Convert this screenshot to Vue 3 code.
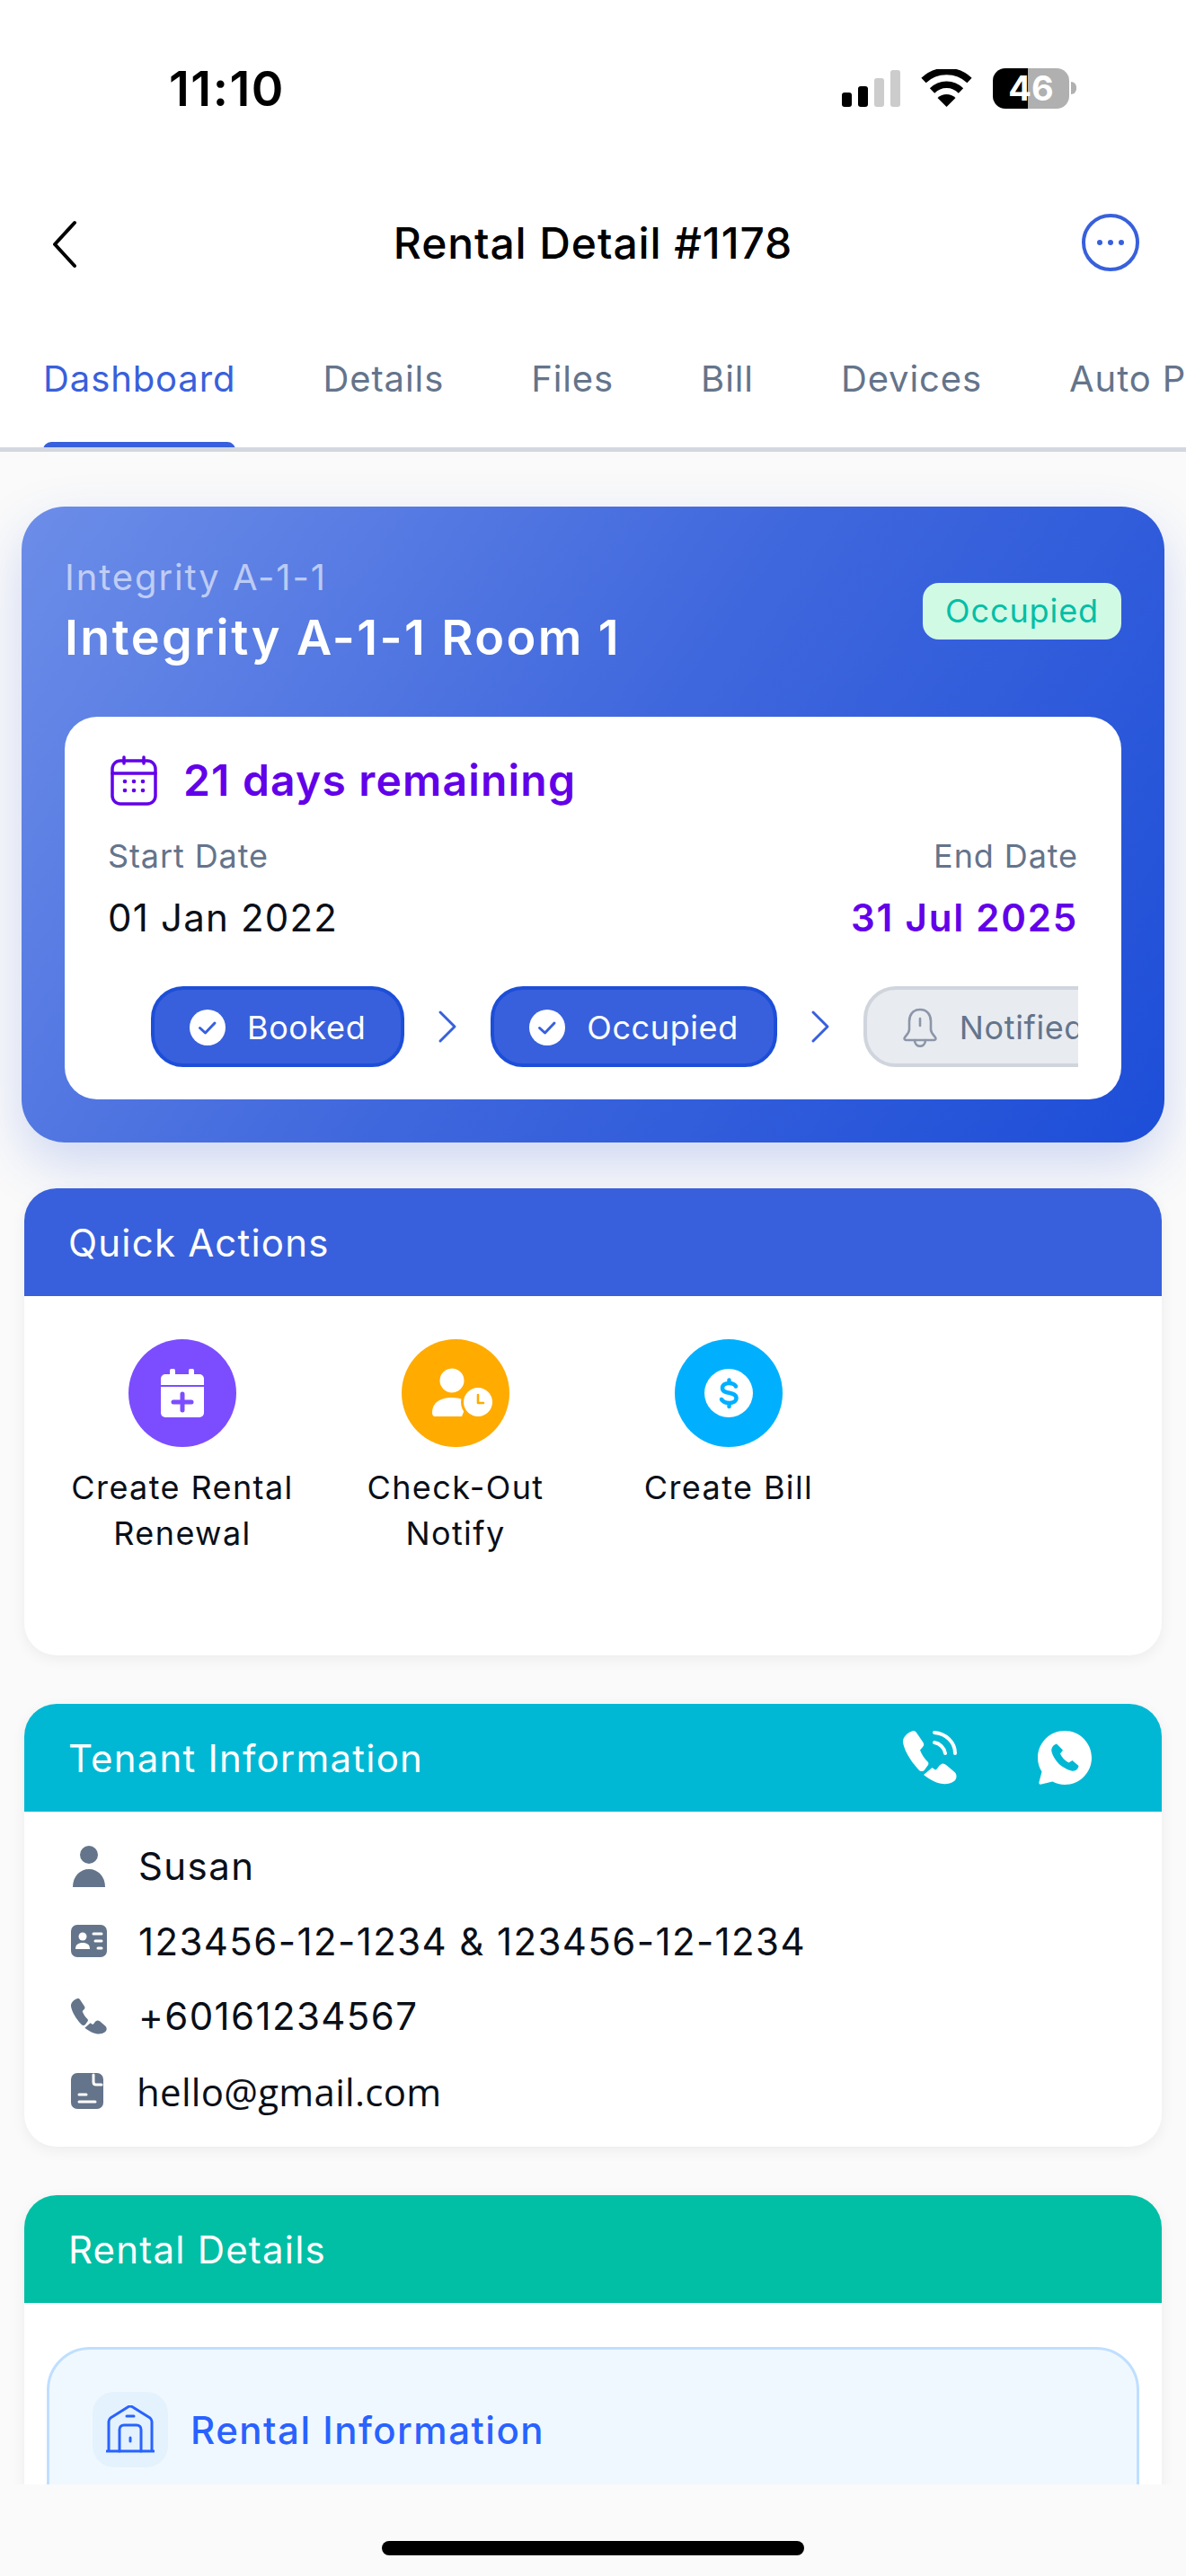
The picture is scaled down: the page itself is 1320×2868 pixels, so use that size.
<template>
  <div class="screen">
    <div class="status">
      <span class="time">11:10</span>
      <div class="status-icons">
        <div class="signal">
          <i class="bar b1"></i><i class="bar b2"></i><i class="bar b3"></i><i class="bar b4"></i>
        </div>
        <svg class="wifi" width="57" height="42" viewBox="0 0 57 42">
          <path d="M28.5 42 L18.5 32 C24 26.5 33 26.5 38.5 32 Z" fill="#000" />
          <path d="M12.5 24 C21.5 15 35.5 15 44.5 24" fill="none" stroke="#000" stroke-width="7.5" />
          <path d="M3 12.5 C17 -1 40 -1 54 12.5" fill="none" stroke="#000" stroke-width="7.5" />
        </svg>
        <div class="battery"><span>46</span></div>
        <i class="nub"></i>
      </div>
    </div>

    <header class="nav">
      <svg class="back" width="28" height="54" viewBox="0 0 28 54">
        <path d="M25 3 L3 27 L25 51" fill="none" stroke="#000" stroke-width="4" stroke-linecap="round" stroke-linejoin="round" />
      </svg>
      <h1>Rental Detail #1178</h1>
      <svg class="more" width="64" height="64" viewBox="0 0 64 64">
        <circle cx="32" cy="32" r="30" fill="none" stroke="#3860dc" stroke-width="4" />
        <circle cx="20" cy="32" r="3" fill="#3860dc" />
        <circle cx="32" cy="32" r="3" fill="#3860dc" />
        <circle cx="44" cy="32" r="3" fill="#3860dc" />
      </svg>
    </header>

    <nav class="tabs">
      <span v-for="(tab, i) in tabs" :key="tab" class="tab" :class="{ active: i === 0 }">{{ tab }}</span>
    </nav>

    <main class="content">
      <section class="hero">
        <div class="hero-top">
          <div>
            <p class="hero-sub">Integrity A-1-1</p>
            <p class="hero-title">Integrity A-1-1 Room 1</p>
          </div>
          <span class="badge">Occupied</span>
        </div>

        <div class="lease">
          <div class="remain">
            <svg width="52" height="56" viewBox="0 0 52 56" fill="none" stroke="#6200ea" stroke-width="3.5" stroke-linecap="round">
              <rect x="2" y="6" width="48" height="48" rx="9" />
              <path d="M2 20 H50 M15 2 V9 M37 2 V9" />
              <g fill="#6200ea" stroke="none">
                <circle cx="16" cy="29" r="2.3" /><circle cx="26" cy="29" r="2.3" /><circle cx="36" cy="29" r="2.3" />
                <circle cx="16" cy="39" r="2.3" /><circle cx="26" cy="39" r="2.3" /><circle cx="36" cy="39" r="2.3" />
              </g>
            </svg>
            <span>21 days remaining</span>
          </div>
          <div class="dates">
            <div>
              <p class="date-label">Start Date</p>
              <p class="date-value">01 Jan 2022</p>
            </div>
            <div class="date-end">
              <p class="date-label">End Date</p>
              <p class="date-value purple">31 Jul 2025</p>
            </div>
          </div>
          <div class="steps">
            <template v-for="(step, i) in steps" :key="step.label">
              <div class="step" :class="{ done: step.done }">
                <svg v-if="step.done" width="40" height="40" viewBox="0 0 40 40">
                  <circle cx="20" cy="20" r="20" fill="#fff" />
                  <path d="M11.5 20.5 L17.5 26 L28 15" fill="none" stroke="#3860dc" stroke-width="3" stroke-linecap="round" stroke-linejoin="round" />
                </svg>
                <svg v-else width="40" height="44" viewBox="0 0 40 44" fill="none" stroke="#8c96a8" stroke-width="2.6" stroke-linecap="round" stroke-linejoin="round">
                  <path d="M20 2 C12 2 8 8 8 15 V24 C8 28 5 30 3 33 C2 35 3 36 5 36 H35 C37 36 38 35 37 33 C35 30 32 28 32 24 V15 C32 8 28 2 20 2 Z" />
                  <path d="M14 36 C14 45 26 45 26 36 M20 12 V20" />
                </svg>
                <span>{{ step.label }}</span>
              </div>
              <svg v-if="i < steps.length - 1" class="chev" width="22" height="38" viewBox="0 0 22 38">
                <path d="M3 3 L19 19 L3 35" fill="none" stroke="#3860dc" stroke-width="3" stroke-linecap="round" stroke-linejoin="round" />
              </svg>
            </template>
          </div>
        </div>
      </section>

      <section class="card">
        <div class="card-head blue">Quick Actions</div>
        <div class="actions">
          <div class="action">
            <div class="round violet">
              <svg width="48" height="54" viewBox="0 0 48 54">
                <path d="M10 6 V2.5 a3 3 0 0 1 6 0 V6 H31 V2.5 a3 3 0 0 1 6 0 V6 H43 a5 5 0 0 1 5 5 V18 H0 V11 a5 5 0 0 1 5 -5 Z" fill="#fff" />
                <path d="M0 20 H48 V49 a5 5 0 0 1 -5 5 H5 a5 5 0 0 1 -5 -5 Z" fill="#fff" />
                <path d="M24 28 V46 M14 37 H34" stroke="#7c4dff" stroke-width="5" stroke-linecap="round" />
              </svg>
            </div>
            <p>Create Rental<br />Renewal</p>
          </div>
          <div class="action">
            <div class="round amber">
              <svg class="user-clock" width="68" height="56" viewBox="0 0 68 56">
                <circle cx="23" cy="14" r="13.5" fill="#fff" />
                <path d="M1 50 C1 38 11 33 23 33 C30 33 36 35 40 39 L34 54 H4 C2 54 1 52 1 50 Z" fill="#fff" />
                <circle cx="52" cy="38" r="19" fill="#ffab00" />
                <circle cx="52" cy="38" r="16" fill="#fff" />
                <path d="M52 30 V39 H58" fill="none" stroke="#ffab00" stroke-width="2.6" stroke-linecap="round" stroke-linejoin="round" />
              </svg>
            </div>
            <p>Check-Out<br />Notify</p>
          </div>
          <div class="action">
            <div class="round sky">
              <svg width="54" height="54" viewBox="0 0 54 54">
                <circle cx="27" cy="27" r="27" fill="#fff" />
                <path d="M35 19.500 C33.500 17 31 16 27.500 16 C23 16 20 18 20 21.500 C20 29 35.500 24.500 35.500 32.500 C35.500 36 32 38 27.500 38 C23.500 38 20.500 36.500 19 34 M27.500 12.500 V16 M27.500 38 V42" fill="none" stroke="#00b0ff" stroke-width="4.500" stroke-linecap="round" />
              </svg>
            </div>
            <p>Create Bill</p>
          </div>
        </div>
      </section>

      <section class="card">
        <div class="card-head cyan">
          <span>Tenant Information</span>
          <div class="head-icons">
            <svg width="60" height="60" viewBox="0 0 60 60" fill="#fff">
              <path :d="handset" />
              <path d="M35 2 C48 3 58 13 58 25 M35 13 C41 14 46 19 47 25" fill="none" stroke="#fff" stroke-width="4" stroke-linecap="round" />
            </svg>
            <svg width="60" height="60" viewBox="0 0 60 60">
              <path d="M30 0 C46.600 0 60 13.400 60 30 C60 46.600 46.600 60 30 60 C25 60 20.500 58.800 16.500 56.600 L4 59.500 C2 60 1 59 1.500 57 L4.500 45.500 C1.600 41 0 35.700 0 30 C0 13.400 13.400 0 30 0 Z" fill="#fff" />
              <path d="M21 14.500 C17.500 15.500 14.500 19 15.500 23.500 C18.500 33.500 26.500 41.500 37.500 44.500 C42 45.500 45 42.500 45.500 39 L38.500 33 L34.500 35.500 C30 33 27 30 25 25.500 L28 21.500 Z" fill="#00b8d4" />
            </svg>
          </div>
        </div>
        <div class="rows">
          <div class="row">
            <svg width="40" height="46" viewBox="0 0 40 46">
              <circle cx="20" cy="10" r="10" fill="#64748b" />
              <path d="M2 46 C2 34 10 26 20 26 C30 26 38 34 38 46 Z" fill="#64748b" />
            </svg>
            <span>Susan</span>
          </div>
          <div class="row">
            <svg width="40" height="36" viewBox="0 0 40 36">
              <rect width="40" height="36" rx="7" fill="#64748b" />
              <circle cx="13" cy="13" r="4.500" fill="#fff" />
              <path d="M5 27 C5 22 8 20 13 20 C18 20 21 22 21 27 Z" fill="#fff" />
              <path d="M25 10 H34 M27 18 H34 M30 26 H34" stroke="#fff" stroke-width="3" stroke-linecap="round" />
            </svg>
            <span>123456-12-1234 &amp; 123456-12-1234</span>
          </div>
          <div class="row">
            <svg width="40" height="40" viewBox="0 0 60 60" fill="#64748b"><path :d="handset" /></svg>
            <span>+60161234567</span>
          </div>
          <div class="row email">
            <svg width="36" height="40" viewBox="0 0 36 40">
              <rect width="36" height="40" rx="7" fill="#64748b" />
              <path d="M25 2 V10 C25 12 26 13 28 13 H34 M9 24 H17 M9 32 H27" fill="none" stroke="#fff" stroke-width="3" stroke-linecap="round" />
            </svg>
            <span>hello@gmail.com</span>
          </div>
        </div>
      </section>

      <section class="card">
        <div class="card-head teal">Rental Details</div>
        <div class="details-body">
          <div class="info">
            <div class="info-head">
              <div class="info-icon">
                <svg width="54" height="54" viewBox="0 0 54 54" fill="none" stroke="#2962ff" stroke-width="3" stroke-linecap="round" stroke-linejoin="round">
                  <path d="M3 50 V18 C3 16 4 15 5 14 L25 1.500 C26 1 28 1 29 1.500 L49 14 C50 15 51 16 51 18 V50" />
                  <path d="M1 51 H53" />
                  <path d="M15 51 V27 C15 24 17 22 20 22 H34 C37 22 39 24 39 27 V51" />
                  <path d="M23 12 H31 M27 36 V40" />
                </svg>
              </div>
              <span>Rental Information</span>
            </div>
          </div>
        </div>
      </section>
    </main>

    <footer class="home"><i></i></footer>
  </div>
</template>

<script setup>
const tabs = ["Dashboard", "Details", "Files", "Bill", "Devices", "Auto Pay"];

const steps = [
  { label: "Booked", done: true },
  { label: "Occupied", done: true },
  { label: "Notified", done: false },
];

const handset =
  "M10 0.5 C12 -0.5 14 0.5 15 2 L22.500 13 C23.500 15 23.500 16.500 22 18 L19 21.500 C21 27 24 31 28 35 C28.500 36 28.500 37 28 38 L24 43.500 C22.500 45.500 19.500 45.500 17.500 43.500 C8 33 1.500 22 0 13 C-0.500 8 4 2.500 10 0.500 Z M23 49 L32.500 41 L36 43.500 C38 43.500 39.500 39 42 37.500 C44 36 46 36.500 48 38 L57.500 46 C60.500 49 60 53.500 57 56 C47 63 35 58 23 49 Z";
</script>

<style>
html,
body {
  background: #fafafa;
}
</style>

<style scoped>
p,
h1 {
  margin: 0;
  font-weight: inherit;
}

.screen {
  width: 1320px;
  height: 2868px;
  display: flex;
  flex-direction: column;
  overflow: hidden;
  background: #fafafa;
  font-family: Inter, "Liberation Sans", sans-serif;
  color: #0a0f18;
}

.status {
  flex: none;
  height: 196px;
  background: #fff;
  display: flex;
  align-items: center;
  justify-content: space-between;
  padding: 0 122px 0 188px;
}

.time {
  font-size: 54px;
  font-weight: 600;
  letter-spacing: 1.500px;
  color: #000;
}

.status-icons {
  display: flex;
  align-items: center;
}

.signal {
  display: flex;
  align-items: flex-end;
  gap: 7px;
  height: 41px;
  margin-right: 23px;
}

.bar {
  display: block;
  width: 11px;
  border-radius: 3px;
  background: #ccc;
}

.b1 {
  height: 16px;
  background: #000;
}

.b2 {
  height: 23px;
  background: #000;
}

.b3 {
  height: 32px;
}

.b4 {
  height: 41px;
}

.wifi {
  margin-right: 23px;
}

.battery {
  width: 85px;
  height: 45px;
  border-radius: 14px;
  background: linear-gradient(90deg, #000 46%, #b0b0b0 46%);
  display: flex;
  align-items: center;
  justify-content: center;
  color: #fff;
  font-size: 38px;
  font-weight: 700;
}

.nub {
  display: block;
  width: 6px;
  height: 14px;
  margin-left: 2px;
  border-radius: 0 6px 6px 0;
  background: #b0b0b0;
}

.nav {
  flex: none;
  height: 148px;
  background: #fff;
  display: grid;
  grid-template-columns: 1fr auto 1fr;
  align-items: center;
  padding: 0 52px;
}

.back {
  margin: 4px 0 0 6px;
  justify-self: start;
}

.more {
  justify-self: end;
}

h1 {
  font-size: 48px;
  font-weight: 500;
  letter-spacing: 0.900px;
  color: #000;
}

.tabs {
  flex: none;
  position: relative;
  height: 159px;
  box-sizing: border-box;
  padding: 48px 0 0 48px;
  display: flex;
  gap: 97px;
  background: #fff;
  border-bottom: 5px solid #d3d7e0;
  overflow: hidden;
  white-space: nowrap;
}

.tab {
  position: relative;
  height: 60px;
  line-height: 60px;
  font-size: 40px;
  letter-spacing: 0.900px;
  color: #64748b;
}

.tab.active {
  color: #3860dc;
}

.tab.active::after {
  content: "";
  position: absolute;
  left: 0;
  right: 0;
  top: 100px;
  height: 9px;
  border-radius: 9px 9px 0 0;
  background: #3860dc;
}

.content {
  flex: 1;
  min-height: 0;
  overflow: hidden;
  padding: 61px 27px 0;
}

.hero {
  margin: 0 -3px 51px;
  height: 708px;
  box-sizing: border-box;
  padding: 48px;
  border-radius: 48px;
  background: linear-gradient(125deg, #6c8de8 0%, #3f67dd 50%, #1d4ed8 100%);
  box-shadow: 0 24px 60px rgba(56, 96, 220, 0.22);
}

.hero-top {
  display: flex;
  align-items: center;
  justify-content: space-between;
  height: 186px;
  padding-bottom: 48px;
  box-sizing: border-box;
}

.hero-sub {
  font-size: 40px;
  line-height: 52px;
  letter-spacing: 1.900px;
  color: rgba(255, 255, 255, 0.6);
}

.hero-title {
  margin: 9px 0 3px;
  font-size: 54px;
  line-height: 64px;
  font-weight: 600;
  letter-spacing: 2.400px;
  color: #fff;
}

.badge {
  margin-top: -2px;
  height: 63px;
  line-height: 63px;
  padding: 0 25px;
  border-radius: 18px;
  background: #d1fae5;
  color: #00bfa5;
  font-size: 36px;
  letter-spacing: 0.900px;
}

.lease {
  height: 426px;
  box-sizing: border-box;
  padding: 41px 48px 0;
  border-radius: 36px;
  background: #fff;
}

.remain {
  display: flex;
  align-items: center;
  gap: 29px;
  padding-left: 3px;
  font-size: 48px;
  font-weight: 600;
  letter-spacing: 1.200px;
  color: #6200ea;
}

.dates {
  display: flex;
  justify-content: space-between;
  margin-top: 33px;
}

.date-end {
  text-align: right;
}

.date-label {
  font-size: 36px;
  line-height: 44px;
  letter-spacing: 0.900px;
  color: #64748b;
}

.date-value {
  margin-top: 21px;
  font-size: 42px;
  line-height: 52px;
  letter-spacing: 1.200px;
}

.date-value.purple {
  color: #6200ea;
  font-weight: 600;
  letter-spacing: 1.800px;
}

.steps {
  display: flex;
  align-items: center;
  margin-top: 50px;
  padding-left: 48px;
  overflow: hidden;
}

.step {
  flex: none;
  height: 90px;
  box-sizing: border-box;
  display: flex;
  align-items: center;
  gap: 24px;
  padding: 2px 39px 0;
  border-radius: 36px;
  border: 4px solid #d0d5dd;
  background: #e8ebf0;
  color: #64748b;
  font-size: 36px;
  letter-spacing: 0.600px;
}

.step.done {
  background: #3860dc;
  border-color: #1d4ed8;
  color: #fff;
}

.chev {
  flex: none;
  margin: 0 37px;
}

.card {
  margin-bottom: 54px;
  border-radius: 36px;
  background: #fff;
  overflow: hidden;
  box-shadow: 0 4px 16px rgba(0, 0, 0, 0.06);
}

.card-head {
  height: 120px;
  box-sizing: border-box;
  display: flex;
  align-items: center;
  justify-content: space-between;
  padding: 0 78px 0 49px;
  color: #fff;
  font-size: 42px;
  letter-spacing: 1.200px;
}

.blue {
  background: #3860dc;
}

.cyan {
  background: #00b8d4;
}

.teal {
  background: #00bfa5;
}

.head-icons {
  display: flex;
  gap: 90px;
}

.actions {
  display: grid;
  grid-template-columns: repeat(4, 304px);
  height: 400px;
  box-sizing: border-box;
  padding: 48px 24px 0;
}

.action {
  display: flex;
  flex-direction: column;
  align-items: center;
  text-align: center;
  font-size: 36px;
  line-height: 51px;
  letter-spacing: 1.400px;
}

.action p {
  margin-top: 20px;
}

.round {
  width: 120px;
  height: 120px;
  border-radius: 50%;
  display: flex;
  align-items: center;
  justify-content: center;
}

.user-clock {
  margin-left: 13px;
  overflow: visible;
}

.violet {
  background: #7c4dff;
}

.amber {
  background: #ffab00;
}

.sky {
  background: #00b0ff;
}

.rows {
  padding: 19px 52px 20px;
}

.row {
  height: 83.500px;
  display: flex;
  align-items: center;
  font-size: 42px;
  letter-spacing: 1.400px;
}

.row svg {
  flex: none;
}

.row span {
  margin-left: 35px;
}

.row:nth-child(4) span {
  margin-left: 37px;
}

.email span {
  font-family: "Open Sans", sans-serif;
  letter-spacing: 0.300px;
}

.details-body {
  padding: 49px 25px 0;
}

.info {
  height: 300px;
  box-sizing: border-box;
  padding: 47px 48px 0;
  border: 3px solid #bfdfff;
  border-radius: 48px;
  background: #f0f8ff;
}

.info-head {
  display: flex;
  align-items: center;
  gap: 25px;
  color: #2962ff;
  font-size: 42px;
  font-weight: 500;
  letter-spacing: 1.500px;
}

.info-icon {
  width: 84px;
  height: 84px;
  border-radius: 24px;
  background: #e3f2fd;
  display: flex;
  align-items: center;
  justify-content: center;
}

.home {
  flex: none;
  height: 102px;
  background: #fafafa;
  display: flex;
  justify-content: center;
  position: relative;
}

.home i {
  display: block;
  width: 470px;
  height: 16px;
  margin-top: 63px;
  border-radius: 8px;
  background: #000;
}
</style>
